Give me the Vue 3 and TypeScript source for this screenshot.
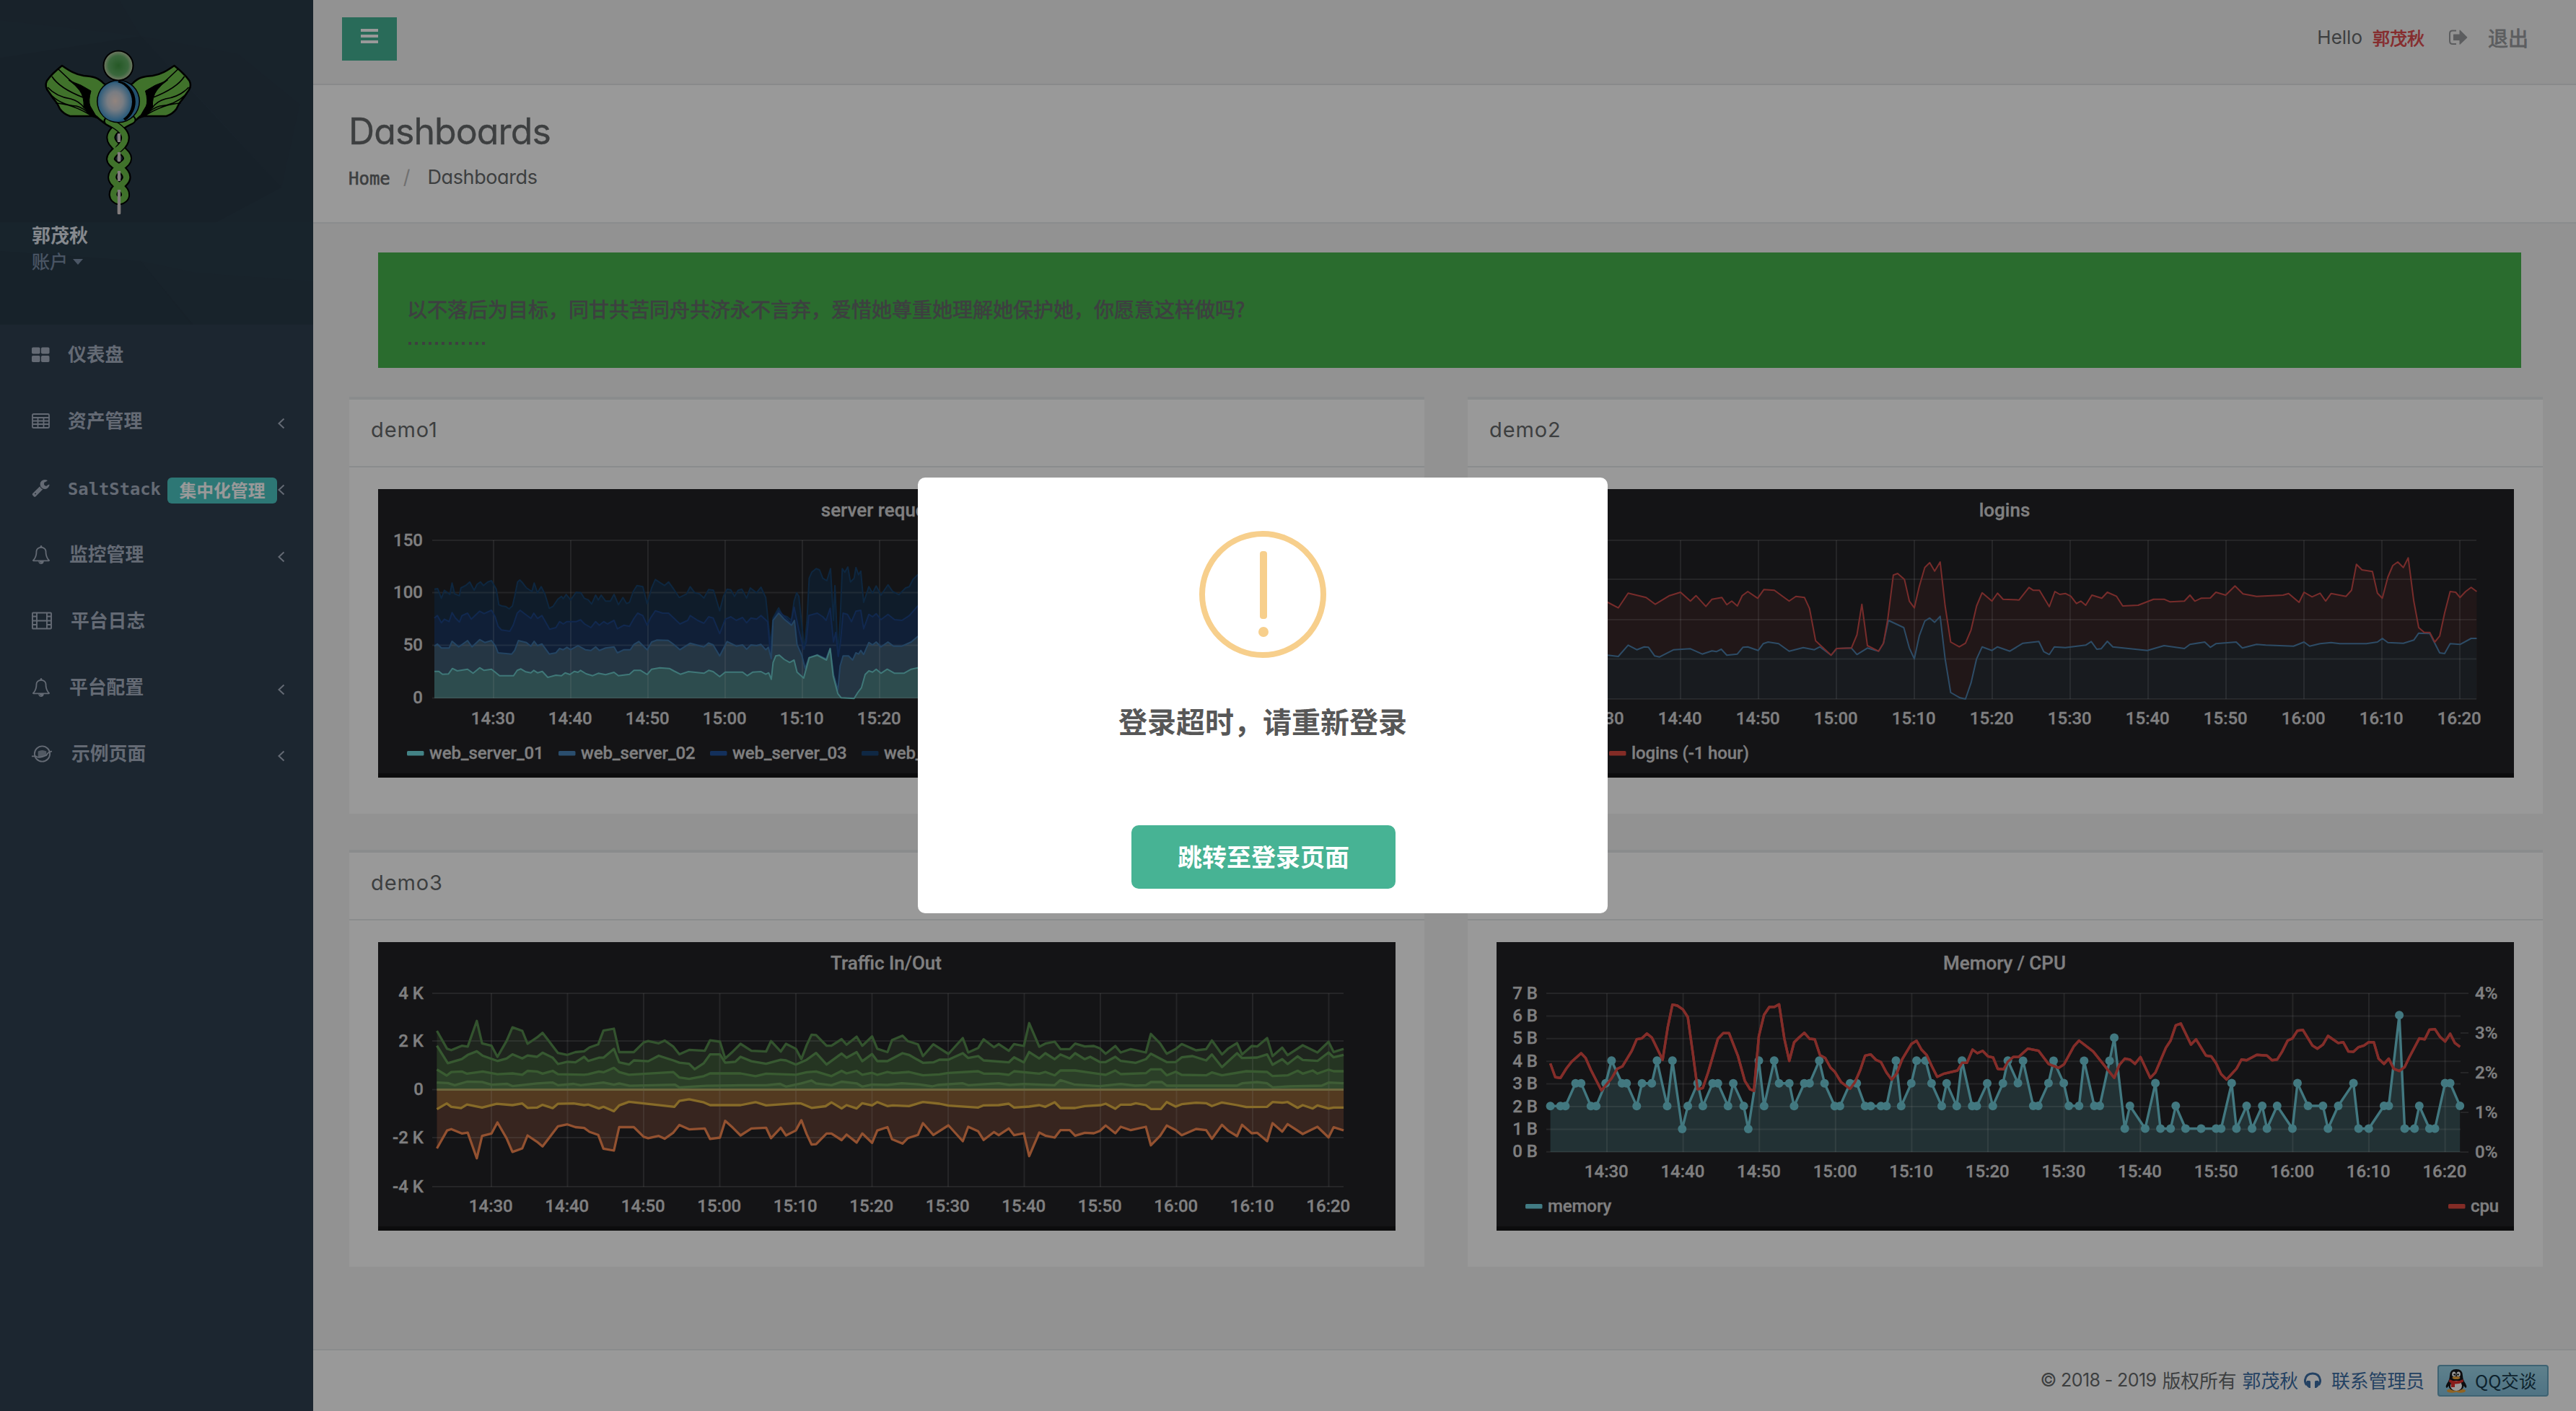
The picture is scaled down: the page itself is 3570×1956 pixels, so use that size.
<script setup lang="ts">
interface MenuItem {
  icon: string
  label: string
  badge?: string
  arrow: boolean
  width: number
  gap: number
}
interface Frame {
  sx: number
  sy: number
  ox: number
  oy: number
}
interface Shape {
  d: string
  color: string
}
interface Dot {
  x: number
  y: number
}
interface Tick {
  at: number
  text: string
}
interface Legend {
  x: number
  color: string
  text: string
}
interface Chart {
  name: string
  title: string
  left: number
  right: number
  gridLeft: number
  top: number
  bottom: number
  rows: Tick[]
  cols: Tick[]
  rightRows: Tick[]
  labelX: number
  colLabelY: number
  stroke: number
  fills: Shape[]
  lines: Shape[]
  dots: Dot[]
  legend: Legend[]
  zero?: number
}

const menu: MenuItem[] = [
  { icon: 'grid', label: '仪表盘', arrow: false, width: 25, gap: 26 },
  { icon: 'table', label: '资产管理', arrow: true, width: 25, gap: 26 },
  { icon: 'wrench', label: 'SaltStack', badge: '集中化管理', arrow: true, width: 25, gap: 26 },
  { icon: 'bell', label: '监控管理', arrow: true, width: 26, gap: 27 },
  { icon: 'film', label: '平台日志', arrow: false, width: 28, gap: 27 },
  { icon: 'bell', label: '平台配置', arrow: true, width: 26, gap: 27 },
  { icon: 'planet', label: '示例页面', arrow: true, width: 30, gap: 27 },
]

// The emblem's right wing is the left one mirrored.
const wings = ['translate(0 0)', 'translate(247.500 0) scale(-1 1)']

// Series are kept as plain "x,y" samples; each frame maps them to panel pixels.
function samples(raw: string, f: Frame): Dot[] {
  return raw.trim().split(/\s+/).map((pair) => {
    const [x, y] = pair.split(',').map(Number)
    return { x: +(x / f.sx + f.ox).toFixed(1), y: +(y / f.sy + f.oy).toFixed(1) }
  })
}
const path = (p: Dot[]): string => 'M' + p.map((q) => `${q.x} ${q.y}`).join('L')
const area = (p: Dot[], base: number): string =>
  `${path(p)}L${p[p.length - 1].x} ${base}L${p[0].x} ${base}Z`
const mirror = (p: Dot[], base: number): Dot[] => p.map((q) => ({ x: q.x, y: 2 * base - q.y }))

const times = ['14:30', '14:40', '14:50', '15:00', '15:10', '15:20', '15:30', '15:40', '15:50', '16:00', '16:10', '16:20']
const timeTicks = (start: number, step: number, count = times.length): Tick[] =>
  times.slice(0, count).map((text, i) => ({ at: +(start + i * step).toFixed(1), text }))

const fServer: Frame = { sx: 1.96, sy: 3, ox: -24, oy: -18 }
const web01 = samples('200,812 212,812 222,824 238,823 249,800 262,810 290,803 305,820 323,797 335,808 355,803 365,815 377,830 415,830 425,808 435,802 448,814 462,818 470,808 480,818 493,812 508,837 530,828 545,830 555,818 568,825 580,812 590,816 597,808 612,822 630,830 645,820 665,826 688,816 700,830 730,824 742,808 760,808 778,825 790,803 812,797 838,800 850,810 868,824 890,813 932,820 945,808 957,813 975,834 990,815 1037,815 1050,830 1065,815 1087,813 1100,824 1108,818 1115,845 1120,775 1127,748 1137,745 1150,762 1165,775 1177,765 1185,815 1203,840 1218,755 1240,745 1265,765 1275,718 1283,830 1296,905 1305,922 1340,925 1350,900 1360,880 1370,825 1380,810 1390,815 1400,803 1413,820 1430,803 1450,820 1475,820 1495,803 1513,797 1640,812 1900,805 2200,812 2680,808', fServer)
const web02 = samples('200,707 208,698 219,715 240,715 248,687 266,710 290,684 302,710 323,680 337,692 355,684 366,707 373,735 410,740 418,725 428,684 450,692 462,707 471,687 480,705 492,698 512,740 530,735 540,717 550,722 560,712 570,722 590,705 610,722 625,725 638,710 648,725 665,715 688,710 697,735 715,722 732,722 742,700 755,688 778,722 790,690 805,682 835,683 850,700 867,722 895,695 932,710 945,694 957,702 975,748 995,688 1020,707 1037,702 1048,720 1060,702 1075,705 1087,700 1100,722 1107,712 1115,760 1120,600 1135,570 1150,595 1170,620 1178,600 1185,700 1198,745 1207,800 1217,757 1240,743 1264,760 1275,716 1284,825 1296,890 1302,790 1310,748 1325,748 1336,765 1345,735 1352,740 1358,725 1366,742 1380,692 1390,702 1400,690 1413,710 1432,690 1447,707 1470,707 1495,690 1513,667 1640,705 1900,695 2200,705 2680,700', fServer)
const web03 = samples('200,590 208,580 219,610 227,595 240,605 248,568 257,590 268,607 275,580 290,570 300,595 323,562 335,572 355,558 365,585 373,625 382,640 405,645 414,620 425,570 433,558 445,572 462,592 470,570 480,592 492,580 513,637 530,630 540,605 550,615 560,605 585,605 597,598 608,615 625,630 638,605 648,620 660,605 670,615 688,600 697,635 715,620 730,625 742,592 752,570 766,580 778,620 787,590 800,560 820,570 836,570 850,590 867,615 888,600 895,580 915,600 932,612 945,585 957,590 975,655 990,595 1005,585 1020,600 1037,588 1048,610 1060,590 1075,595 1087,580 1105,605 1113,740 1121,596 1135,560 1155,590 1168,612 1177,545 1190,640 1203,720 1210,690 1217,580 1240,570 1255,585 1264,600 1275,550 1284,690 1290,650 1297,750 1303,690 1310,570 1322,575 1333,605 1345,562 1358,558 1366,635 1380,575 1390,585 1400,572 1413,597 1432,575 1450,597 1470,600 1490,580 1513,540 1640,590 1900,580 2200,590 2680,585', fServer)
const web04 = samples('200,470 209,468 219,508 227,475 242,492 248,445 255,490 268,497 272,465 285,455 296,440 308,475 316,450 325,440 333,455 345,440 355,435 368,470 375,535 383,540 393,542 403,552 412,540 418,500 426,440 432,432 440,445 450,465 465,480 471,445 480,485 490,460 500,490 512,550 522,542 535,512 545,500 550,510 558,492 570,515 585,483 598,485 607,508 618,515 627,532 638,495 645,515 653,495 665,520 678,520 688,492 700,535 712,505 722,530 730,525 740,480 750,455 766,460 778,530 790,465 800,430 815,445 825,455 836,440 850,470 865,505 885,490 895,460 907,485 920,490 932,507 945,472 958,475 975,560 985,500 995,470 1005,473 1015,500 1025,475 1035,470 1048,507 1058,465 1075,485 1087,462 1100,505 1113,700 1120,590 1135,548 1145,578 1158,585 1170,600 1177,520 1184,485 1190,500 1205,720 1212,600 1218,425 1225,400 1237,385 1246,390 1255,425 1266,435 1276,385 1284,600 1288,455 1296,740 1302,600 1308,385 1315,400 1323,378 1330,440 1340,425 1345,380 1352,410 1358,395 1366,525 1380,460 1390,487 1400,457 1413,495 1432,452 1445,480 1462,493 1480,465 1490,460 1500,430 1513,410 1640,480 1900,470 2200,480 2680,470', fServer)

const fLogins: Frame = { sx: 1.1701, sy: 3, ox: 126, oy: -18 }
const loginsPast = samples('-60,510 -20,495 33,525 50,548 66,487 95,505 110,533 133,497 151,483 167,520 176,497 192,542 202,512 218,505 226,535 234,520 243,540 251,497 260,480 276,508 286,472 303,475 327,520 338,500 352,505 360,550 370,685 395,745 404,717 428,715 437,660 445,533 454,705 472,728 480,695 487,595 496,412 503,405 514,430 522,520 530,548 538,460 547,380 555,360 563,395 572,357 580,540 589,690 603,710 613,695 622,640 631,540 640,485 656,520 665,487 674,512 700,515 716,463 723,475 733,475 749,543 758,480 766,492 775,488 784,500 793,530 800,520 808,537 818,495 834,508 843,483 858,500 868,540 893,537 918,512 935,512 945,523 968,520 977,495 985,520 995,508 1010,507 1019,483 1035,495 1050,457 1063,490 1085,500 1128,495 1137,488 1154,525 1162,483 1175,502 1188,487 1197,520 1206,488 1230,500 1239,475 1247,367 1256,390 1273,397 1281,487 1289,508 1298,420 1306,372 1314,357 1323,380 1331,340 1340,520 1348,630 1357,650 1366,650 1374,690 1382,665 1390,570 1399,480 1408,483 1415,505 1424,480 1433,463 1442,480', fLogins)
const loginsNow = samples('-60,720 -20,710 33,745 50,750 66,703 80,722 92,710 99,712 109,748 117,752 140,722 167,718 186,740 202,727 209,730 217,720 226,745 243,740 252,712 260,710 277,725 285,697 293,690 310,697 327,728 350,713 368,722 377,710 395,745 404,717 428,715 437,742 454,715 472,728 480,695 488,600 513,630 522,715 530,760 538,665 547,603 555,590 563,608 572,583 580,760 589,900 604,922 613,927 622,860 631,760 640,710 656,725 665,710 685,728 706,695 732,688 740,730 749,742 757,710 775,713 808,703 817,688 826,720 833,718 843,687 852,710 908,725 935,705 968,717 977,700 1001,690 1010,712 1019,697 1052,690 1062,715 1085,700 1100,703 1145,707 1162,690 1171,707 1188,697 1206,692 1220,697 1263,697 1281,690 1289,675 1298,692 1323,695 1340,682 1348,653 1366,655 1382,735 1390,738 1399,697 1415,700 1433,675 1442,675', fLogins)

const fTrafA: Frame = { sx: 2.063, sy: 2.613, ox: -44, oy: -146 }
const fTrafB: Frame = { sx: 2.0103, sy: 3, ox: 676, oy: -46 }
const traf1 = [
  ...samples('259,703 288,768 300,773 330,757 347,760 373,667 388,748 415,757 432,797 458,740 475,690 503,703 518,750 545,727 561,710 605,783 632,790 655,780 680,777 695,763 720,752 735,702 765,695 780,780 822,780 850,745 863,740 893,748 910,738 935,760 952,788 980,772 1025,775 1040,737 1068,742 1083,803 1105,778 1127,750 1158,775 1200,778 1214,740 1242,778 1257,750 1285,768 1301,805 1316,755 1330,717 1343,718 1373,757 1387,757 1416,733 1430,753 1459,724 1475,757 1503,723 1518,768 1547,780', fTrafA),
  ...samples('73,545 102,527 117,550 145,563 159,612 188,563 230,603 270,537 285,597 313,578 328,542 357,575 370,562 398,590 413,562 440,570 455,475 483,573 500,560 526,552 542,583 568,583 583,560 610,572 635,570 652,580 668,602 695,570 710,597 738,583 780,597 794,520 820,560 838,602 863,583 880,562 920,588 948,583 964,547 992,605 1010,580 1034,558 1048,605 1075,570 1090,572 1118,537 1133,612 1160,577 1175,608 1217,567 1258,597 1289,553 1303,595 1331,582', fTrafB),
]
const traf2 = [
  ...samples('259,757 290,820 330,805 347,790 373,777 390,793 432,812 458,803 475,788 503,803 518,792 545,797 561,782 590,800 605,823 632,815 655,817 680,797 692,812 722,800 735,800 765,768 780,817 808,825 822,810 863,813 893,793 935,810 952,818 980,822 996,842 1022,820 1040,788 1068,788 1083,818 1112,815 1127,797 1158,813 1200,822 1242,808 1257,810 1285,825 1316,808 1343,783 1373,825 1416,785 1430,800 1459,780 1475,813 1503,787', fTrafA),
  ...samples('32,633 60,633 102,600 120,607 159,640 188,638 205,627 230,627 270,600 285,620 313,612 328,630 398,638 413,617 440,638 455,595 483,622 500,600 526,625 542,605 568,622 583,600 610,625 625,615 652,637 668,637 695,615 710,632 752,640 780,625 794,602 838,637 863,637 880,617 910,612 948,630 964,605 992,658 1034,600 1048,620 1090,618 1118,605 1133,648 1160,625 1175,645 1203,613 1217,628 1258,632 1289,597 1303,617 1331,607', fTrafB),
]
const traf3 = [
  ...samples('259,843 287,865 300,852 330,850 345,858 390,850 432,860 475,857 503,862 518,848 545,850 561,858 590,848 605,860 680,862 692,860 722,850 735,853 765,837 780,852 808,862 935,852 952,872 980,877 1022,867 1040,857 1127,857 1170,867 1200,858 1285,862 1316,853 1343,850 1387,867 1416,848 1430,857 1459,848 1475,862 1503,855', fTrafA),
  ...samples('32,690 60,678 75,683 120,678 159,692 205,688 230,682 313,675 328,685 370,685 398,690 413,675 483,685 500,678 526,692 542,672 583,672 620,680 668,690 695,672 710,687 780,683 794,667 822,667 838,692 863,677 880,690 948,692 964,680 992,692 1060,675 1118,678 1133,695 1175,692 1203,673 1217,685 1245,672 1258,685 1289,668 1303,675 1331,675', fTrafB),
]
const trafOut = [
  ...samples('259,987 287,966 300,978 328,983 345,970 388,981 430,967 475,972 503,966 518,982 545,981 561,971 590,983 605,967 650,966 680,972 692,970 722,984 735,978 765,994 780,973 808,960 850,966 938,978 952,957 980,951 1022,962 1040,972 1127,972 1170,961 1200,973 1285,965 1300,966 1330,982 1370,976 1387,962 1416,984 1430,972 1459,984 1475,965 1503,973', fTrafA),
  ...samples('32,803 60,820 75,817 120,820 159,803 205,810 230,818 313,826 328,817 370,816 398,810 413,826 455,822 483,816 500,823 526,804 542,828 583,828 610,820 655,816 668,810 695,831 710,814 738,814 752,808 780,816 794,832 822,832 838,803 863,822 880,812 920,806 948,808 964,820 992,805 1034,816 1060,824 1118,823 1133,803 1160,806 1175,803 1203,827 1217,816 1245,830 1258,817 1289,830 1303,826 1331,826', fTrafB),
]
const traf4 = [
  ...samples('259,890 290,892 310,900 345,887 388,888 415,898 460,895 475,903 545,893 590,890 605,900 650,895 670,900 735,890 765,898 780,893 810,902 940,898 952,908 1030,902 1127,900 1200,900 1240,895 1257,905 1300,893 1330,883 1343,893 1387,900 1416,887 1459,893 1475,905 1503,897', fTrafA),
  ...samples('60,732 100,725 150,730 185,738 200,732 270,725 285,733 370,725 400,732 440,728 526,733 542,712 580,730 650,737 710,728 750,735 780,733 794,720 825,720 838,735 1034,735 1048,725 1090,720 1118,725 1133,742 1180,738 1270,735 1289,722 1331,725', fTrafB),
]
const zeroY = 204.5
const outLow = mirror(traf1, zeroY)

const fMemA: Frame = { sx: 2.063, sy: 3, ox: -34, oy: -26 }
const fMemB: Frame = { sx: 1.985, sy: 2.32, ox: 706, oy: -26 }
const memory = [
  ...samples('224,760 253,760 267,760 296,665 312,665 340,760 355,760 382,665 399,571 429,665 442,665 471,760 486,665 514,665 529,571 558,760 573,571 601,855 617,760 645,665 660,760 688,665 703,665 732,760 747,665 777,760 790,855 820,571 835,760 864,571 878,665 907,665 921,760 950,665 965,665 993,571 1008,665 1037,760 1052,760 1081,665 1100,665 1124,760 1140,760 1169,760 1185,760 1212,571 1227,760 1256,665 1271,571 1297,571 1314,665 1343,760 1357,665 1386,760 1401,571 1430,760 1443,760 1473,665 1489,760 1518,665 1532,571', fMemA),
  ...samples('33,514 47,442 75,587 89,587 117,514 131,442 159,514 173,587 201,587 215,442 243,587 258,587 285,442 298,368 327,660 341,587 383,660 411,514 425,660 453,660 467,587 494,660 537,660 578,660 592,660 621,514 634,660 662,587 677,660 705,587 718,660 746,587 788,660 802,514 831,587 872,587 886,660 914,587 956,514 970,660 998,660 1040,587 1053,587 1082,295 1097,660 1124,660 1137,587 1165,660 1180,660 1208,514 1222,514 1249,587', fMemB),
]
const cpu = [
  ...samples('224,583 238,640 253,643 270,603 285,575 312,540 325,560 340,610 370,695 399,645 415,605 430,595 457,530 471,482 486,478 500,458 514,475 545,568 560,430 573,338 587,342 603,358 617,390 632,545 645,690 660,685 675,620 703,480 718,457 735,457 760,550 780,655 795,690 806,697 820,470 835,380 850,348 865,347 878,337 893,480 907,572 921,495 935,475 950,455 965,480 980,482 995,548 1010,560 1025,600 1037,617 1055,660 1081,688 1095,660 1110,610 1124,550 1140,545 1155,568 1169,577 1185,620 1200,650 1214,625 1230,565 1256,502 1271,488 1285,525 1300,548 1315,595 1330,638 1350,625 1388,612 1401,580 1415,580 1431,525 1445,540 1460,530 1475,553 1490,558 1503,605 1520,607 1532,575', fMemA),
  ...samples('20,430 35,430 60,403 90,410 117,452 145,465 160,453 187,395 201,377 240,412 298,497 312,455 327,435 341,438 355,452 370,430 397,497 411,480 440,400 453,377 467,328 481,322 509,390 523,373 550,425 565,428 578,450 592,485 607,502 634,468 648,438 662,440 690,423 718,425 732,440 746,438 760,412 775,377 788,370 802,345 817,343 843,393 857,403 872,390 886,362 914,385 928,382 942,412 956,413 970,398 985,393 998,382 1012,382 1025,435 1040,452 1053,435 1067,468 1082,475 1097,462 1110,430 1137,370 1152,373 1165,342 1180,340 1194,365 1208,380 1222,355 1235,385 1249,397', fMemB),
]

const charts: Chart[] = [
  {
    name: 'demo1', title: 'server requests', left: 78, right: 1343, gridLeft: 75, top: 71, bottom: 290,
    rows: [{ at: 71, text: '150' }, { at: 143.5, text: '100' }, { at: 216.5, text: '50' }, { at: 289.5, text: '0' }],
    cols: timeTicks(160, 107, 6), rightRows: [], labelX: 62, colLabelY: 326, stroke: 2,
    fills: [
      { d: area(web04, 290), color: '#193046' },
      { d: area(web03, 290), color: '#1b355d' },
      { d: area(web02, 290), color: '#3e5a72' },
      { d: area(web01, 290), color: '#4c7f82' },
    ],
    lines: [
      { d: path(web04), color: '#18416b' },
      { d: path(web03), color: '#1d4484' },
      { d: path(web02), color: '#3c73a6' },
      { d: path(web01), color: '#6ac8c9' },
    ],
    dots: [],
    legend: [
      { x: 40, color: '#70dadf', text: 'web_server_01' },
      { x: 250, color: '#4682b8', text: 'web_server_02' },
      { x: 460, color: '#20509a', text: 'web_server_03' },
      { x: 670, color: '#1a4372', text: 'web_server_04' },
    ],
  },
  {
    name: 'demo2', title: 'logins', left: 75, right: 1358, gridLeft: 72, top: 71, bottom: 291,
    rows: [{ at: 71, text: '80' }, { at: 125, text: '60' }, { at: 181, text: '40' }, { at: 235.5, text: '20' }, { at: 291, text: '0' }],
    cols: timeTicks(147, 108), rightRows: [], labelX: 58, colLabelY: 326, stroke: 2,
    fills: [
      { d: area(loginsPast, 291), color: '#372729' },
      { d: area(loginsNow, 291), color: '#282e35' },
    ],
    lines: [
      { d: path(loginsNow), color: '#4c7fab' },
      { d: path(loginsPast), color: '#c94a48' },
    ],
    dots: [],
    legend: [
      { x: 40, color: '#4c88b8', text: 'logins' },
      { x: 156, color: '#dc4a40', text: 'logins (-1 hour)' },
    ],
  },
  {
    name: 'demo3', title: 'Traffic In/Out', left: 81.5, right: 1338, gridLeft: 75, top: 71, bottom: 339,
    rows: [{ at: 71, text: '4 K' }, { at: 137, text: '2 K' }, { at: 204.5, text: '0' }, { at: 271, text: '-2 K' }, { at: 339, text: '-4 K' }],
    cols: timeTicks(157, 105.5), rightRows: [], labelX: 63, colLabelY: 374, stroke: 3.3,
    fills: [
      { d: area(traf1, zeroY), color: '#343f33' },
      { d: area(traf2, zeroY), color: '#3f593a' },
      { d: area(traf3, zeroY), color: '#486a43' },
      { d: area(traf4, zeroY), color: '#547a4c' },
      { d: area(outLow, zeroY), color: '#5c3e34' },
      { d: area(trafOut, zeroY), color: '#8a6236' },
    ],
    lines: [
      { d: path(traf1), color: '#558a4d' },
      { d: path(traf2), color: '#5d9552' },
      { d: path(traf3), color: '#609853' },
      { d: path(traf4), color: '#6a9c5a' },
      { d: path(outLow), color: '#f58850' },
      { d: path(trafOut), color: '#e2b244' },
    ],
    dots: [],
    legend: [],
    zero: zeroY,
  },
  {
    name: 'demo4', title: 'Memory / CPU', left: 74.6, right: 1336, gridLeft: 69, top: 71, bottom: 291,
    rows: [7, 6, 5, 4, 3, 2, 1, 0].map((n, i) => ({ at: +(71 + i * 31.4).toFixed(1), text: `${n} B` })),
    cols: timeTicks(153, 105.6),
    rightRows: [4, 3, 2, 1, 0].map((n, i) => ({ at: 71 + i * 55, text: `${n}%` })),
    labelX: 57, colLabelY: 326, stroke: 3.4,
    fills: [{ d: area(memory, 291), color: '#3a5358' }],
    lines: [
      { d: path(memory), color: '#6fc9d6' },
      { d: path(cpu), color: '#dc4b45' },
    ],
    dots: memory,
    legend: [
      { x: 40, color: '#6fcfdc', text: 'memory' },
      { x: 1319, color: '#dc4a40', text: 'cpu' },
    ],
  },
]
</script>

<template>
  <div class="page">
    <aside class="sidebar">
      <div class="profile">
        <svg class="facets" viewBox="0 0 434 450" aria-hidden="true">
          <path d="M0 28L195 50L165 0H434V160L330 75L195 50L300 160L390 260L434 60V450H0Z" fill="#2a3e4d" opacity=".35" />
          <path d="M195 50L390 260L300 308H0V80Z" fill="#26333f" opacity=".35" />
          <path d="M0 308H434V390L270 378L195 362L265 450H0Z" fill="#2b3e4d" opacity=".35" />
          <path d="M0 348L195 362L268 450H0Z" fill="#26333f" opacity=".35" />
        </svg>
        <svg class="logo" viewBox="0 0 240 240" aria-hidden="true">
          <defs>
            <radialGradient id="orb" cx="50%" cy="48%" r="52%">
              <stop offset="0" stop-color="#f3dcd2" />
              <stop offset=".45" stop-color="#c9d0da" />
              <stop offset="1" stop-color="#3f94cc" />
            </radialGradient>
            <radialGradient id="gem" cx="50%" cy="50%" r="50%">
              <stop offset="0" stop-color="#3f9440" />
              <stop offset=".7" stop-color="#62ad66" />
              <stop offset="1" stop-color="#b6c8a2" />
            </radialGradient>
          </defs>
          <g v-for="t in wings" :key="t" :transform="t" stroke="#000" stroke-linejoin="round">
            <path fill="#6cbf49" stroke-width="2.500" d="M46 31C56 38 64 43 76 45C88 46 96 47 104 56L112 60V104L122 113L117 118Q102 110 93 101H57Q48 98 43 91L39 83Q33 76 28 68Q21 60 25 52Q32 42 46 31Z" />
            <path fill="#000" stroke-width="1" d="M55 51Q64 55 72 58L86 66Q82 80 85 87L95 104L86 101L76 89Q77 74 70 65Q64 57 55 51Z" />
            <path fill="none" stroke-width="1.700" d="M41 36Q55 50 72 64M32 46Q42 62 75 75M26 61Q38 74 58 77Q70 80 77 90M37 83Q60 84 86 100M28 69Q44 86 66 87Q76 90 84 98" />
          </g>
          <g fill="none" stroke-linecap="round">
            <path d="M125 122V235" stroke="#d8cfcf" stroke-width="4.500" />
            <path d="M110 108C138 122 138 134 125 146C109 158 110 164 125 172C139 182 138 190 125 198C113 206 116 216 125 218" stroke="#000" stroke-width="13" />
            <path d="M142 106C108 122 108 134 125 146C141 156 140 164 125 172C112 182 113 190 125 198C137 206 136 216 125 218" stroke="#000" stroke-width="13" />
            <path d="M142 106C108 122 108 134 125 146C141 156 140 164 125 172C112 182 113 190 125 198C137 206 136 216 125 218" stroke="#6cbf49" stroke-width="9" />
            <path d="M110 108C138 122 138 134 125 146" stroke="#000" stroke-width="11" />
            <path d="M110 108C138 122 138 134 125 146C109 158 110 164 125 172C139 182 138 190 125 198C113 206 116 216 125 218" stroke="#6cbf49" stroke-width="8.500" />
            <path d="M125 125V137M125 151V164M125 177V191M125 203V237" stroke="#d8cfcf" stroke-width="4.200" stroke-linecap="butt" />
          </g>
          <circle cx="124" cy="80.500" r="30" fill="#000" />
          <circle cx="124" cy="80.500" r="28.500" fill="#3a86b8" />
          <path d="M124 54A28 28 0 0 1 132 105A34 34 0 0 0 124 54Z" fill="#000" stroke="#000" stroke-width="5" />
          <ellipse cx="119.500" cy="81" rx="23.500" ry="27" fill="url(#orb)" />
          <circle cx="124" cy="31" r="21.500" fill="#000" />
          <circle cx="124" cy="31" r="19.500" fill="url(#gem)" />
        </svg>
        <div class="who">郭茂秋</div>
        <div class="account">账户<i class="caret"></i></div>
      </div>
      <nav class="menu">
        <a v-for="(item, i) in menu" :key="i" class="item">
          <svg v-if="item.icon === 'grid'" class="ico" width="25" height="24" viewBox="0 0 25 24" :style="{ marginRight: item.gap + 'px' }">
            <g fill="currentColor"><rect x="0" y="1.500" width="11.500" height="9" rx="1.800" /><rect x="13" y="1.500" width="11.500" height="9" rx="1.800" /><rect x="0" y="13" width="11.500" height="9" rx="1.800" /><rect x="13" y="13" width="11.500" height="9" rx="1.800" /></g>
          </svg>
          <svg v-else-if="item.icon === 'table'" class="ico" width="25" height="24" viewBox="0 0 25 24" :style="{ marginRight: item.gap + 'px' }">
            <path d="M1 3.500Q1 2 2.500 2H22.500Q24 2 24 3.500V20Q24 21 22.500 21H2.500Q1 21 1 20ZM1 7H24M1 11.500H24M1 16H24M8.500 6V21M16.500 6V21" fill="none" stroke="currentColor" stroke-width="1.800" />
          </svg>
          <svg v-else-if="item.icon === 'wrench'" class="ico" width="25" height="25" viewBox="64 64 1664 1728" :style="{ marginRight: item.gap + 'px' }">
            <path fill="currentColor" d="M448 1472q0-26-19-45t-45-19-45 19-19 45 19 45 45 19 45-19 19-45zm644-420l-682 682q-37 37-90 37-52 0-91-37l-106-108q-38-36-38-90 0-53 38-91l681-681q39 98 114.500 173.500t173.500 114.500zm634-435q0 39-23 106-47 134-164.500 217.500t-258.500 83.500q-185 0-316.500-131.500t-131.500-316.500 131.500-316.500 316.500-131.500q58 0 121.500 16.500t107.500 46.500q16 11 16 28t-16 28l-293 169v224l193 107q5-3 79-48.500t135.500-81 70.500-35.500q15 0 23.500 10t8.500 25z" />
          </svg>
          <svg v-else-if="item.icon === 'bell'" class="ico" width="26" height="26" viewBox="0 0 1792 1792" :style="{ marginRight: item.gap + 'px' }">
            <path fill="currentColor" d="M912 1696q0-16-16-16-59 0-101.500-42.500t-42.500-101.500q0-16-16-16t-16 16q0 73 51.500 124.500t124.500 51.500q16 0 16-16zm-666-288h1300q-266-300-266-832 0-51-24-105t-69-103-121.500-80.500-169.500-31.500-169.500 31.500-121.500 80.500-69 103-24 105q0 532-266 832zm1482 0q0 52-38 90t-90 38h-448q0 106-75 181t-181 75-181-75-75-181h-448q-52 0-90-38t-38-90q50-42 91-88t85-119.500 74.500-158.500 50-206 19.500-260q0-152 117-282.500t307-158.500q-8-19-8-39 0-40 28-68t68-28 68 28 28 68q0 20-8 39 190 28 307 158.500t117 282.500q0 139 19.500 260t50 206 74.500 158.500 85 119.500 91 88z" />
          </svg>
          <svg v-else-if="item.icon === 'film'" class="ico" width="28" height="25" viewBox="0 0 28 25" :style="{ marginRight: item.gap + 'px' }">
            <path d="M1 2.500Q1 1.500 2 1.500H26Q27 1.500 27 2.500V22.500Q27 23.500 26 23.500H2Q1 23.500 1 22.500ZM7 1.500V23.500M21 1.500V23.500M7 12.500H21M1 6.500H7M1 12.500H7M1 18H7M21 6.500H27M21 12.500H27M21 18H27" fill="none" stroke="currentColor" stroke-width="1.900" />
          </svg>
          <svg v-else class="ico" width="29" height="26" viewBox="0 0 30 26" :style="{ marginRight: item.gap + 'px' }">
            <circle cx="15" cy="13" r="11" fill="none" stroke="currentColor" stroke-width="1.900" />
            <path d="M0 16.500H6Q10 20 21 15Q24 9.500 29 9.500" fill="none" stroke="currentColor" stroke-width="1.900" />
            <path d="M9 9.500Q15 6 21 9.500V14Q15 19 9 17Z" fill="currentColor" opacity=".75" />
          </svg>
          <span class="label">{{ item.label }}</span>
          <span v-if="item.badge" class="badge">{{ item.badge }}</span>
          <svg v-if="item.arrow" class="arrow" width="10" height="16" viewBox="0 0 10 16"><path d="M8.500 1.500L1.500 8L8.500 14.500" fill="none" stroke="currentColor" stroke-width="2" /></svg>
        </a>
      </nav>
    </aside>

    <main class="main">
      <header class="topbar">
        <button class="toggle"><i></i><i></i><i></i></button>
        <div class="user">
          <span class="hello">Hello</span>
          <span class="red">郭茂秋</span>
          <svg class="exit" width="26" height="22" viewBox="0 0 26 22"><path d="M10 1.500H5Q1 1.500 1 5.500V16Q1 20 5 20H10" fill="none" stroke="currentColor" stroke-width="2" /><path d="M6.500 6.500H14.500V1.200Q14.500 0 15.500 .8L25 10.200Q25.600 10.800 25 11.400L15.500 20.500Q14.500 21.300 14.500 20V15H6.500Q6 15 6 14.500V7Q6 6.500 6.500 6.500Z" fill="currentColor" /></svg>
          <span class="quit">退出</span>
        </div>
      </header>

      <section class="heading">
        <h2>Dashboards</h2>
        <div class="crumbs"><a>Home</a><span class="slash">/</span><span class="here">Dashboards</span></div>
      </section>

      <div class="banner">
        <p>以不落后为目标，同甘共苦同舟共济永不言弃，爱惜她尊重她理解她保护她，你愿意这样做吗?</p>
        <p class="dots"><i v-for="n in 12" :key="n"></i></p>
      </div>

      <div class="cards">
        <section v-for="c in charts" :key="c.name" class="card">
          <h5>{{ c.name }}</h5>
          <div class="body">
            <svg class="chart" width="1410" height="400" viewBox="0 0 1410 400">
              <rect width="1410" height="400" fill="#222225" />
              <rect y="394" width="1410" height="6" fill="#151517" />
              <path v-for="(f, k) in c.fills" :key="'f' + k" :d="f.d" :fill="f.color" />
              <g class="grid">
                <path v-for="r in c.rows" :key="'r' + r.text" :d="`M${c.gridLeft} ${r.at}H${c.right}`" />
                <path v-for="t in c.cols" :key="'c' + t.text" :d="`M${t.at} ${c.top}V${c.bottom}`" />
                <path v-for="r in c.rightRows" :key="'q' + r.text" :d="`M${c.right} ${r.at}h11`" />
              </g>
              <path v-if="c.zero" :d="`M${c.left} ${c.zero}H${c.right}`" stroke="#b5aa66" stroke-width="3" />
              <path v-for="(l, k) in c.lines" :key="'l' + k" :d="l.d" fill="none" :stroke="l.color" :stroke-width="c.stroke" stroke-linejoin="round" />
              <circle v-for="(p, k) in c.dots" :key="'d' + k" :cx="p.x" :cy="p.y" r="6" fill="#6fc9d6" />
              <path v-if="c.dots.length" :d="c.lines[1].d" fill="none" :stroke="c.lines[1].color" :stroke-width="c.stroke" stroke-linejoin="round" />
              <text class="title" x="704" y="38" text-anchor="middle">{{ c.title }}</text>
              <text v-for="r in c.rows" :key="'tr' + r.text" :x="c.labelX" :y="r.at + 7.500" text-anchor="end">{{ r.text }}</text>
              <text v-for="t in c.cols" :key="'tc' + t.text" :x="t.at - 0.700" :y="c.colLabelY" text-anchor="middle">{{ t.text }}</text>
              <text v-for="r in c.rightRows" :key="'tq' + r.text" x="1356" :y="r.at + 7.500">{{ r.text }}</text>
              <g v-for="g in c.legend" :key="'g' + g.text">
                <rect :x="g.x" y="363" width="23.500" height="6.500" rx="1.500" :fill="g.color" />
                <text :x="g.x + 31" y="373.500" class="key">{{ g.text }}</text>
              </g>
            </svg>
          </div>
        </section>
      </div>

      <footer class="footer">
        <span class="copy">© 2018 - 2019</span>
        <span class="rights">版权所有</span>
        <a class="owner">郭茂秋</a>
        <svg class="phones" width="24" height="23" viewBox="0 0 24 23"><path d="M3.500 18Q1 14 1.500 11Q3 2 12 2Q21 2 22.500 11Q23 14 20.500 18" fill="none" stroke="currentColor" stroke-width="3" /><path d="M4 12H7.500Q9 12 9 13.500V22H7Q2.500 19 2.500 16ZM20 12H16.500Q15 12 15 13.500V22H17Q21.500 19 21.500 16Z" fill="currentColor" /></svg>
        <a class="admin">联系管理员</a>
        <span class="qq">
          <svg width="32" height="34" viewBox="0 0 32 34">
            <ellipse cx="10" cy="31" rx="7" ry="2.800" fill="#f0a53a" /><ellipse cx="22" cy="31" rx="7" ry="2.800" fill="#f0a53a" />
            <path d="M16 1Q25 1 25 10Q25 14 27 18Q32 25 29.500 27Q28 27 26.500 24Q26 31 16 31Q6 31 5.500 24Q4 27 2.500 27Q0 25 5 18Q7 14 7 10Q7 1 16 1Z" fill="#16161a" />
            <ellipse cx="16" cy="24" rx="8" ry="7" fill="#fff" />
            <ellipse cx="12.800" cy="8" rx="2.600" ry="3.500" fill="#fff" /><ellipse cx="19.200" cy="8" rx="2.600" ry="3.500" fill="#fff" />
            <circle cx="13.500" cy="8.500" r="1.200" fill="#000" /><circle cx="18.500" cy="8.500" r="1.200" fill="#000" />
            <ellipse cx="16" cy="13" rx="5.500" ry="2" fill="#f0a53a" />
            <path d="M6.500 15Q16 20 25.500 15L26 18.500Q20 22 14 21.500V26H9V20.500L6 18.500Z" fill="#e3302c" />
          </svg>
          <b>QQ交谈</b>
        </span>
      </footer>
    </main>

    <div class="overlay">
      <div class="modal">
        <div class="warn"><i class="bar"></i><i class="dot"></i></div>
        <h3>登录超时，请重新登录</h3>
        <button>跳转至登录页面</button>
      </div>
    </div>
  </div>
</template>

<style>
body {
  margin: 0;
}
</style>

<style scoped>
.page {
  position: relative;
  display: flex;
  width: 3570px;
  height: 1956px;
  overflow: hidden;
  background: #f3f3f4;
  color: #676a6c;
  font-family: Inter, "Noto Sans CJK SC", sans-serif;
  font-feature-settings: "cv11";
}
.page * {
  box-sizing: border-box;
}
.sidebar {
  flex: none;
  width: 434px;
  background: #2f4050;
}
.profile {
  position: relative;
  height: 450px;
  padding: 60px 0 0 44px;
  background: #293947;
}
.facets {
  position: absolute;
  inset: 0;
  width: 434px;
  height: 450px;
}
.logo {
  position: relative;
  display: block;
  width: 240px;
  height: 240px;
  margin-left: -4px;
}
.who {
  position: relative;
  height: 36px;
  margin-top: 7px;
  color: #dfe4ed;
  font: 700 26px/36px "Noto Sans CJK SC", sans-serif;
}
.account {
  position: relative;
  display: flex;
  align-items: center;
  height: 36px;
  color: #7d90a9;
  font: 400 25px/36px "Noto Sans CJK SC", sans-serif;
  -webkit-text-stroke: 0.4px;
}
.caret {
  margin: 4px 0 0 7px;
  border: 7.500px solid transparent;
  border-top: 8px solid currentColor;
  border-bottom: 0;
}
.menu {
  margin-top: -4px;
}
.item {
  position: relative;
  display: flex;
  align-items: center;
  height: 92.200px;
  padding-left: 44px;
  color: #a7b1c2;
  font: 700 25.800px/36px "Noto Sans CJK SC", sans-serif;
}
.label {
  margin-left: -1px;
  font-family: "DejaVu Sans Mono", "Noto Sans CJK SC", monospace;
}
.item:nth-child(3) .label {
  margin-top: 3px;
  font-size: 23.800px;
}
.badge {
  margin: 7px 0 0 9px;
  width: 152px;
  height: 36px;
  border-radius: 6px;
  background: #4bc6c4;
  color: #fff;
  font-size: 23.800px;
  line-height: 33px;
  text-align: center;
}
.arrow {
  position: absolute;
  left: 385px;
  top: 41px;
}
.main {
  display: flex;
  flex: 1;
  flex-direction: column;
}
.topbar {
  display: flex;
  justify-content: space-between;
  height: 118px;
  padding: 24px 66px 0 40px;
  border-bottom: 2px solid #e4e6e8;
}
.toggle {
  display: flex;
  flex-direction: column;
  align-items: center;
  gap: 4px;
  width: 76px;
  height: 60px;
  padding: 16px 0 0;
  border: 0;
  background: #45b295;
}
.toggle i {
  width: 24px;
  height: 4px;
  background: #fff;
}
.user {
  display: flex;
  align-items: center;
  height: 56px;
}
.hello {
  font-size: 26px;
  margin: -2px 14px 0 0;
}
.red {
  margin-right: 34px;
  color: #df4a4c;
  font: 400 24px/36px "Noto Sans CJK SC", sans-serif;
  -webkit-text-stroke: 0.7px;
}
.exit,
.quit {
  color: #999c9e;
}
.exit {
  margin-right: 28px;
}
.quit {
  margin-top: -1px;
  font: 400 28px/36px "Noto Sans CJK SC", sans-serif;
  -webkit-text-stroke: 0.8px;
}
.heading {
  height: 192px;
  padding: 30px 0 0 49px;
  border-bottom: 2px solid #e7eaec;
  background: #fff;
}
h2 {
  margin: 0;
  font-size: 50px;
  font-weight: 400;
  line-height: 68px;
  letter-spacing: -0.900px;
  -webkit-text-stroke: 0.3px;
}
.crumbs {
  display: flex;
  align-items: center;
  height: 58px;
  font-size: 27px;
}
.crumbs a {
  margin-top: 5px;
  font: 400 24px/36px "DejaVu Sans Mono", monospace;
  -webkit-text-stroke: 0.6px;
}
.here {
  letter-spacing: -0.400px;
}
.slash {
  margin: 0 24px 0 18px;
  color: #bbb;
}
.banner {
  height: 160px;
  margin: 40px 76px 0 90px;
  padding: 58px 0 0 40px;
  background: #46b44d;
  font: 400 28px/40px "Noto Sans CJK SC", sans-serif;
  -webkit-text-stroke: 0.7px;
}
.banner p {
  margin: 0;
}
.banner .dots {
  display: flex;
  gap: 5.300px;
  margin: 26px 0 0 2px;
}
.dots i {
  width: 4px;
  height: 4px;
  background: #676a6c;
}
.cards {
  display: grid;
  grid-template-columns: 1490px 1490px;
  gap: 50px 60px;
  margin: 40px 0 0 50px;
}
.card {
  height: 578px;
  border-top: 4px solid #e7eaec;
  background: #fff;
}
h5 {
  height: 94px;
  margin: 0;
  padding: 22px 30px 0;
  border-bottom: 2px solid #e7eaec;
  font-size: 29px;
  font-weight: 400;
  line-height: 40px;
  letter-spacing: 0.900px;
}
.body {
  padding: 30px 40px 0;
}
.chart {
  display: block;
}
.grid path {
  fill: none;
  stroke: rgba(255, 255, 255, 0.13);
  stroke-width: 2;
}
.chart text {
  fill: #d4d4d6;
  stroke: #d4d4d6;
  stroke-width: 0.3px;
  font: 500 24px Roboto, sans-serif;
}
.chart .title {
  font-size: 26px;
}
.chart .key {
  letter-spacing: -0.100px;
}
.footer {
  display: flex;
  align-items: center;
  justify-content: flex-end;
  height: 86px;
  margin-top: auto;
  padding: 0 38px 2px 0;
  border-top: 2px solid #e7eaec;
  background: #fff;
  font: 400 25.800px/36px "Noto Sans CJK SC", sans-serif;
}
.copy {
  margin-right: 8px;
  font-family: Inter, sans-serif;
  font-size: 25px;
  letter-spacing: -0.600px;
}
.footer a,
.phones {
  color: #3c6ea6;
}
.owner {
  margin: 0 8px;
}
.admin {
  margin: 0 18px 0 14px;
}
.qq {
  display: flex;
  align-items: center;
  width: 154px;
  height: 44px;
  margin-top: 2px;
  padding-left: 8px;
  border: 2px solid #68a5c0;
  border-radius: 4px;
  background: linear-gradient(#9cd6ea, #85c0dc);
  color: #173a4c;
}
.qq b {
  margin-left: 10px;
  font-weight: 400;
  font-size: 24.500px;
}
.overlay {
  position: absolute;
  inset: 0;
  display: flex;
  justify-content: center;
  align-items: flex-start;
  padding: 662px 70px 0 0;
  background: rgba(0, 0, 0, 0.4);
}
.modal {
  display: flex;
  flex-direction: column;
  align-items: center;
  width: 956px;
  height: 604px;
  padding-top: 74px;
  border-radius: 10px;
  background: #fff;
}
.warn {
  display: flex;
  flex-direction: column;
  align-items: center;
  width: 176px;
  height: 176px;
  padding: 20px 0 0 2px;
  border: 8px solid #f7cf8c;
  border-radius: 50%;
}
.bar {
  width: 10px;
  height: 94px;
  border-radius: 4px;
  background: #f7cf8c;
}
.dot {
  width: 14px;
  height: 14px;
  margin-top: 11px;
  border-radius: 50%;
  background: #f7cf8c;
}
h3 {
  margin: 57px 0 0;
  color: #575757;
  font: 700 40px/60px "Noto Sans CJK SC", sans-serif;
}
.modal button {
  width: 366px;
  height: 88px;
  margin: 115px 0 0 2px;
  padding: 0 0 3px;
  border: 0;
  border-radius: 10px;
  background: #47b394;
  color: #fff;
  font: 700 34px/60px "Noto Sans CJK SC", sans-serif;
}
</style>
